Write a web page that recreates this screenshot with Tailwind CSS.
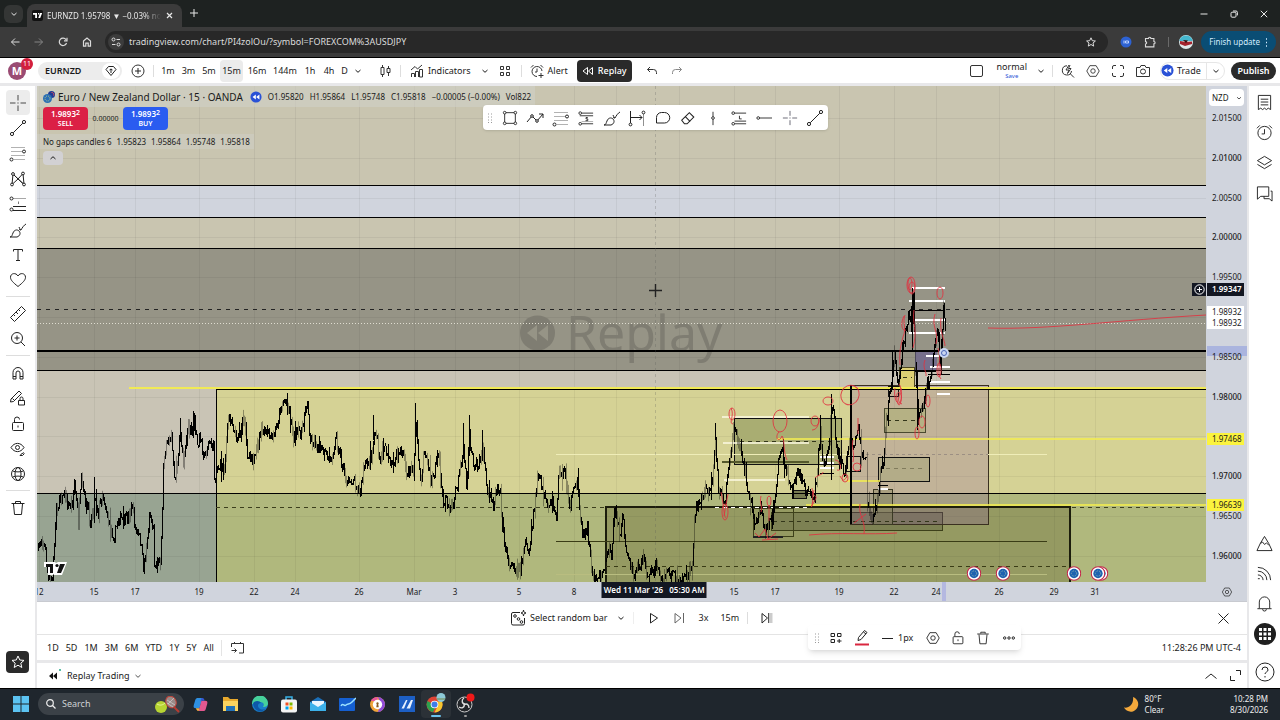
<!DOCTYPE html>
<html lang="en">

<head>
    <meta charset="UTF-8">
    <meta name="viewport" content="width=device-width, initial-scale=1.0">
    <title>EURNZD 1.95798 ▼ −0.03% normal</title>
    <script src="https://cdn.jsdelivr.net/npm/@tailwindcss/browser@4"></script>
</head>

<body class="h-screen flex flex-col overflow-hidden bg-[#e8e8ea] font-['Noto_Sans','Open_Sans',sans-serif] text-[9px] leading-3 text-[#1a1a1a]">

  <!-- Shared icons -->
  <svg class="hidden">
    <symbol id="i-chev" viewBox="0 0 8 8"><path d="M1.500 3L4 5.300 6.500 3" fill="none" stroke="currentColor" /></symbol>
    <symbol id="i-cross" viewBox="0 0 18 18"><path d="M9 1v5.500M9 11.500V17M1 9h5.500M11.500 9H17" fill="none" stroke="currentColor" stroke-opacity=".8" /><path d="M8.500 9h1" stroke="currentColor" /></symbol>
    <symbol id="i-line" viewBox="0 0 18 18"><g fill="none" stroke="currentColor"><path d="M4.200 13.800l9.600-9.600" /><circle cx="3" cy="15" r="1.600" /><circle cx="15" cy="3" r="1.600" /></g></symbol>
    <symbol id="i-fib" viewBox="0 0 18 18"><g fill="none" stroke="currentColor"><path d="M2 3.500h14M2 7.500h11M2 11.500h14M5 15.500h11" opacity=".35" /><circle cx="15" cy="7.500" r="1.500" /><circle cx="2.500" cy="15.500" r="1.500" /></g></symbol>
    <symbol id="i-pos" viewBox="0 0 18 18"><g fill="none" stroke="currentColor"><path d="M4 3.500h13" opacity=".4" /><path d="M4 11.500h13M4 15.500h13" /><path d="M9.500 6.500v2.500" opacity=".6" /><circle cx="2.500" cy="3.500" r="1.500" /><circle cx="2.500" cy="14.500" r="1.500" /></g></symbol>
    <symbol id="i-brush" viewBox="0 0 18 18"><path d="M1 16c2 0 2-2 3-4 1-3 4-4 6-2s1 5-2 6H1zM10 9c1-1 1 0 2 0 1-2 3-5 5-6M10 6c1 2 1 3 2 3" fill="none" stroke="currentColor" /></symbol>
    <symbol id="i-hex" viewBox="0 0 18 18"><g fill="none" stroke="currentColor"><path d="M5.500 3h7L16 9l-3.500 6h-7L2 9z" stroke-linejoin="round" /><circle cx="9" cy="9" r="2.500" /></g></symbol>
    <symbol id="i-lock" viewBox="0 0 18 18"><g fill="none" stroke="currentColor"><rect x="3.500" y="7.500" width="11" height="8" rx="1" /><path d="M5.500 7V4.500a2.500 2.500 0 015 0M9 10.500v2" /></g></symbol>
    <symbol id="i-trash" viewBox="0 0 18 18"><path d="M2.500 4.500h13M6.500 4V2.500h5V4M4.500 5l1 10.500h7l1-10.500" fill="none" stroke="currentColor" stroke-linejoin="round" /></symbol>
    <symbol id="i-grip" viewBox="0 0 6 10"><path d="M1 1h1M4 1h1M1 4h1M4 4h1M1 7h1M4 7h1M1 9.500h1M4 9.500h1" stroke="#999" /></symbol>
    <symbol id="i-rew" viewBox="0 0 14 14"><circle cx="7" cy="7" r="6.500" fill="#2951d6" /><path d="M6.800 4.200v5.600L3 7zM11 4.200v5.600L7.200 7z" fill="#fff" /></symbol>
    <symbol id="i-eu" viewBox="0 0 16 16"><circle cx="8" cy="8" r="7.200" fill="#fff" stroke="#c22b4b" stroke-width="1.200" /><circle cx="8" cy="8" r="5" fill="#1e62b0" /><circle cx="8" cy="8" r="2.800" fill="none" stroke="#8fb2b0" stroke-dasharray="1 1" /></symbol>
  </svg>

  <!-- Browser tabs -->
  <div class="h-[27px] shrink-0 bg-[#1e2221] flex items-end pl-1 text-[#e8e8e8]">
    <button class="w-[19px] h-[18px] mb-1 rounded-md bg-[#343635] flex items-center justify-center" aria-label="Search tabs"><svg class="w-2 h-2"><use href="#i-chev" /></svg></button>
    <div class="ml-1 w-[155px] h-[23px] rounded-t-lg bg-[#3b3b3b] flex items-center pl-[5px] pr-2">
      <svg class="w-[11px] h-[11px] shrink-0" viewBox="0 0 11 11"><rect width="11" height="11" rx="2" fill="#111" /><path d="M1 3h4v5H3.200V4.800H1zM6 3h1.200v1.500H6zM8 3h2.200L8.200 8H6.300z" fill="#fff" /></svg>
      <span class="ml-1 w-[114px] overflow-hidden whitespace-nowrap text-[8px] [mask-image:linear-gradient(to_right,black_85%,transparent)]">EURNZD 1.95798 ▼ −0.03% normal</span>
      <button class="ml-[5px] shrink-0" aria-label="Close tab"><svg class="w-[7px] h-[7px]" viewBox="0 0 7 7"><path d="M1 1l5 5M6 1L1 6" stroke="currentColor" stroke-width="1.200" /></svg></button>
    </div>
    <button class="ml-2 mb-[10px]" aria-label="New tab"><svg class="w-2 h-2" viewBox="0 0 8 8"><path d="M4 0v8M0 4h8" stroke="currentColor" /></svg></button>
    <div class="ml-auto mb-[9px] mr-[12px] flex items-center gap-[22px]">
      <button aria-label="Minimize"><svg class="w-2 h-2" viewBox="0 0 8 8"><path d="M.5 4h7" stroke="currentColor" /></svg></button>
      <button aria-label="Restore"><svg class="w-2 h-2" viewBox="0 0 8 8"><path d="M1 3.200a1 1 0 011-1h3a1 1 0 011 1v3a1 1 0 01-1 1H2a1 1 0 01-1-1zM3 1h3a1.400 1.400 0 011.400 1.400v3" fill="none" stroke="currentColor" /></svg></button>
      <button aria-label="Close"><svg class="w-2 h-2" viewBox="0 0 8 8"><path d="M.8.8l6.400 6.400M7.200.8L.8 7.200" stroke="currentColor" /></svg></button>
    </div>
  </div>

  <!-- Address bar -->
  <div class="h-[31px] shrink-0 bg-[#3b3b3b] border-b border-black flex items-center pl-[3px] pr-1 text-[#dcdcdc]">
    <div class="flex">
      <button class="w-6 flex justify-center" aria-label="Back"><svg class="w-[10px] h-[10px]" viewBox="0 0 10 10"><path d="M9.500 5h-8M5 1.500L1.500 5 5 8.500" fill="none" stroke="currentColor" /></svg></button>
      <button class="w-6 flex justify-center text-[#858585]" aria-label="Forward"><svg class="w-[10px] h-[10px]" viewBox="0 0 10 10"><path d="M.5 5h8M5 1.500L8.500 5 5 8.500" fill="none" stroke="currentColor" /></svg></button>
      <button class="w-6 flex justify-center" aria-label="Reload"><svg class="w-[10px] h-[10px]" viewBox="0 0 10 10"><path d="M8.500 6A3.700 3.700 0 118 2.700M9 .8v3H6" fill="none" stroke="currentColor" stroke-width="1.200" /></svg></button>
      <button class="w-6 flex justify-center" aria-label="Home"><svg class="w-[10px] h-[10px]" viewBox="0 0 10 10"><path d="M1.500 4L5 1l3.500 3v5.200H6.200V6.200H3.800v3H1.500z" fill="none" stroke="currentColor" stroke-width="1.200" /></svg></button>
    </div>
    <div class="ml-[6px] h-[22px] flex-1 rounded-full bg-[#282828] flex items-center pl-[3px] pr-3">
      <span class="w-4 h-4 rounded-full bg-[#3c3c3c] flex items-center justify-center"><svg class="w-[10px] h-[10px]" viewBox="0 0 10 10"><g fill="none" stroke="currentColor"><circle cx="2.500" cy="2.500" r="1.500" /><path d="M5.500 2.500H9M1 7.500h3.500" /><circle cx="7.500" cy="7.500" r="1.500" /></g></svg></span>
      <input class="ml-[5px] w-[400px] bg-transparent text-[9px] outline-none" type="text" aria-label="Address" value="tradingview.com/chart/PI4zolOu/?symbol=FOREXCOM%3AUSDJPY">
      <button class="ml-auto" aria-label="Bookmark"><svg class="w-[10px] h-[10px]" viewBox="0 0 10 10"><path d="M5 .8l1.300 2.900 3.100.3L7 6l.7 3.100L5 7.500 2.300 9.100 3 6 .6 4l3.100-.3z" fill="none" stroke="currentColor" /></svg></button>
    </div>
    <button class="ml-3 w-3 h-3" aria-label="Extension"><svg viewBox="0 0 12 12"><circle cx="6" cy="6" r="5.500" fill="#2d62d3" /><path d="M4 4.500v3M5.500 5h3v2h-3z" stroke="#bcd2ff" fill="none" /></svg></button>
    <button class="ml-3 w-3 h-3" aria-label="Extensions"><svg viewBox="0 0 12 12"><path d="M1.500 2.500h3a1.200 1.200 0 012.400 0h3v3a1.200 1.200 0 010 2.400v3h-8.400V8a1.200 1.200 0 000-2.400z" fill="none" stroke="currentColor" stroke-width="1.100" /></svg></button>
    <span class="ml-3 w-px h-[10px] bg-[#6a6a6a]"></span>
    <button class="ml-[10px] w-[14px] h-[14px]" aria-label="Profile"><svg viewBox="0 0 14 14"><circle cx="7" cy="7" r="7" fill="#dfe8ea" /><path d="M.7 4.500A7 7 0 0113.300 4.500V6H.5z" fill="#45b8cf" /><path d="M1 6l6 1 6-.5V9l-7 2-5-2z" fill="#a3222c" /><path d="M4 5l5 .5L7 8z" fill="#311" /></svg></button>
    <button class="ml-2 h-[22px] rounded-full bg-[#0a4d74] px-2 flex items-center gap-[5px] text-[8px] text-[#d3ecff] whitespace-nowrap">Finish update <svg class="w-[3px] h-[9px]" viewBox="0 0 3 9"><path d="M1 1h1M1 4.500h1M1 8h1" stroke="currentColor" stroke-width="1.400" /></svg></button>
  </div>

  <!-- Chart header -->
  <header class="h-[25px] mb-[3px] shrink-0 bg-white flex items-center pl-2 pr-1 relative">
    <button class="w-[18px] h-[18px] rounded-full bg-[#9a4b73] text-white text-[11px] font-bold relative" aria-label="User menu">M
      <span class="absolute left-[13px] -top-1 w-3 h-3 rounded-full bg-[#d31f3c] text-[7px] leading-3 font-normal">11</span>
    </button>
    <div class="ml-3 w-[84px] h-[18px] rounded-full bg-[#ececec] flex items-center justify-between pl-[7px] pr-[2px]">
      <button class="font-semibold">EURNZD</button>
      <button class="w-[18px] h-4 rounded-full bg-white flex items-center justify-center" aria-label="Flag symbol"><svg class="w-[12px] h-3" viewBox="0 0 12 12"><path d="M3.500 1.500h5l2.500 3L6 10.500 1 4.500zM6 4v4M4.500 5L6 4l1.500 1" fill="none" stroke="#222" /></svg></button>
    </div>
    <button class="ml-[9px]" aria-label="Compare"><svg class="w-[14px] h-[14px]" viewBox="0 0 14 14"><circle cx="7" cy="7" r="6" fill="none" stroke="#333" /><path d="M7 4v6M4 7h6" stroke="#222" /></svg></button>
    <span class="ml-2 w-px h-3 bg-[#ddd]"></span>
    <nav class="ml-1 flex items-center">
      <button class="w-[20px]">1m</button>
      <button class="w-[21px]">3m</button>
      <button class="w-[20px]">5m</button>
      <button class="w-[23px] h-[22px] ml-px rounded bg-[#ebebeb]">15m</button>
      <button class="w-[28px]">16m</button>
      <button class="w-[28px]">144m</button>
      <button class="w-[20px] ml-px">1h</button>
      <button class="w-[18px]">4h</button>
      <button class="w-[13px]">D</button>
      <button class="w-[14px] flex justify-center" aria-label="More intervals"><svg class="w-2 h-2"><use href="#i-chev" /></svg></button>
    </nav>
    <button class="ml-[13px]" aria-label="Candles"><svg class="w-[14px] h-[14px]" viewBox="0 0 14 14"><path d="M4.500 1v2M4.500 11v2M3 3.500h3v7H3zM10.500 2v2M10.500 9v3M9 4.500h3v4H9z" fill="none" stroke="#333" /></svg></button>
    <span class="ml-2 w-px h-3 bg-[#ddd]"></span>
    <button class="ml-[9px] flex items-center gap-1"><svg class="w-[14px] h-[14px]" viewBox="0 0 14 14"><path d="M1 6l4-3.500L7.500 5 12 1M1.500 13V9.500h3V13M5.500 13V7.500h3V13M9.500 13V5.500h3V13z" fill="none" stroke="#333" /></svg>Indicators</button>
    <button class="ml-[10px]" aria-label="Indicator templates"><svg class="w-2 h-2"><use href="#i-chev" /></svg></button>
    <button class="ml-[10px]" aria-label="Layouts"><svg class="w-3 h-3" viewBox="0 0 12 12"><path d="M1.500 1.500h3v3h-3zM7.500 1.500h3v3h-3zM1.500 7.500h3v3h-3zM7.500 7.500h3v3h-3z" fill="none" stroke="#333" /></svg></button>
    <span class="ml-[10px] w-px h-3 bg-[#ddd]"></span>
    <button class="ml-2 flex items-center gap-1"><svg class="w-[14px] h-[14px]" viewBox="0 0 14 14"><path d="M7 12.500A5 5 0 1112 7M7 4.500V8H5M1 3.500L3.500 1M10.500 1L13 3.500M11 9v5M8.500 11.500h5" fill="none" stroke="#333" /></svg>Alert</button>
    <button class="ml-[9px] w-[55px] h-[22px] rounded bg-[#2a2a2a] text-white flex items-center justify-center gap-1 font-medium"><svg class="w-3 h-3" viewBox="0 0 12 12"><path d="M5.500 2.500v7L1 6zM10.500 2.500v7L6.500 6z" fill="none" stroke="#fff" /></svg>Replay</button>
    <button class="ml-[14px]" aria-label="Undo"><svg class="w-3 h-3" viewBox="0 0 12 12"><path d="M4 2L1.500 4.500 4 7M1.500 4.500h6a3 3 0 013 3V9" fill="none" stroke="#333" /></svg></button>
    <button class="ml-[13px] text-[#888]" aria-label="Redo"><svg class="w-3 h-3" viewBox="0 0 12 12"><path d="M8 2l2.500 2.500L8 7M10.500 4.500h-6a3 3 0 00-3 3V9" fill="none" stroke="currentColor" /></svg></button>

    <div class="ml-auto flex items-center">
      <button aria-label="Layout setup"><svg class="w-[14px] h-3" viewBox="0 0 14 12"><rect x=".5" y=".5" width="12" height="11" rx="1.500" fill="none" stroke="#333" /></svg></button>
      <button class="ml-3 flex flex-col items-center"><span class="leading-[10px]">normal</span><span class="text-[6px] leading-[8px] text-[#2951d6]">Save</span></button>
      <button class="ml-[10px]" aria-label="Manage layouts"><svg class="w-2 h-2"><use href="#i-chev" /></svg></button>
      <span class="ml-[7px] w-px h-3 bg-[#ddd]"></span>
      <button class="ml-2" aria-label="Quick search"><svg class="w-[14px] h-[14px]" viewBox="0 0 14 14"><path d="M6 1.800A4.600 4.600 0 1010.500 7M9.500 10l3.500 3.500M8 1L5 6h3L6.500 9.500 10 4.500H7.500L9 1" fill="none" stroke="#333" /></svg></button>
      <button class="ml-[10px]" aria-label="Settings"><svg class="w-4 h-4 text-[#333]"><use href="#i-hex" /></svg></button>
      <button class="ml-[11px]" aria-label="Fullscreen"><svg class="w-3 h-3" viewBox="0 0 12 12"><path d="M.5 4V2A1.500 1.500 0 012 .5h2M8 .5h2A1.500 1.500 0 0111.500 2v2M11.500 8v2a1.500 1.500 0 01-1.500 1.500H8M4 11.500H2A1.500 1.500 0 01.5 10V8" fill="none" stroke="#333" /></svg></button>
      <button class="ml-3" aria-label="Snapshot"><svg class="w-[14px] h-3" viewBox="0 0 14 12"><path d="M.5 2.500h3.500L5 .5h4l1 2h3.500v9H.5z" fill="none" stroke="#333" stroke-linejoin="round" /><circle cx="7" cy="6.500" r="2.500" fill="none" stroke="#333" /></svg></button>
      <div class="ml-[10px] h-[18px] w-[65px] rounded-full border border-[#e6e6e6] flex items-center">
        <button class="flex items-center gap-[3px]"><svg class="w-[13px] h-[13px]"><use href="#i-rew" /></svg>Trade</button>
        <button class="ml-auto pl-[5px] pr-1 h-4 border-l border-[#e6e6e6]" aria-label="Trade menu"><svg class="w-2 h-2"><use href="#i-chev" /></svg></button>
      </div>
      <button class="ml-[6px] w-[45px] h-[18px] rounded-full bg-[#2a2a2a] text-white font-semibold">Publish</button>
    </div>
  </header>

  <div class="flex-1 min-h-0 flex gap-[2px]">

    <!-- Drawing tools -->
    <aside class="w-[35px] shrink-0 bg-white flex flex-col items-center text-[#222]">
      <div class="mt-1 h-[203px] flex flex-col">
        <button class="flex-1 w-6 rounded bg-[#ececec] flex items-center justify-center" aria-label="Cross"><svg class="w-[18px] h-[18px]"><use href="#i-cross" /></svg></button>
        <button class="flex-1 w-6 flex items-center justify-center" aria-label="Trend line"><svg class="w-[18px] h-[18px]"><use href="#i-line" /></svg></button>
        <button class="flex-1 w-6 flex items-center justify-center" aria-label="Fib retracement"><svg class="w-[18px] h-[18px]"><use href="#i-fib" /></svg></button>
        <button class="flex-1 w-6 flex items-center justify-center" aria-label="Patterns"><svg class="w-[18px] h-[18px]" viewBox="0 0 18 18"><g fill="none" stroke="currentColor"><path d="M3 14.500L4 4l5 5 5-5.500 1 11L9 9zM4 4l11 10.500" /><circle cx="3" cy="14.500" r="1.400" fill="#fff" /><circle cx="4" cy="4" r="1.400" fill="#fff" /><circle cx="14" cy="3.500" r="1.400" fill="#fff" /><circle cx="15" cy="14.500" r="1.400" fill="#fff" /></g></svg></button>
        <button class="flex-1 w-6 flex items-center justify-center" aria-label="Positions"><svg class="w-[18px] h-[18px]"><use href="#i-pos" /></svg></button>
        <button class="flex-1 w-6 flex items-center justify-center" aria-label="Brush"><svg class="w-[18px] h-[18px]"><use href="#i-brush" /></svg></button>
        <button class="flex-1 w-6 flex items-center justify-center" aria-label="Text"><svg class="w-[18px] h-[18px]" viewBox="0 0 18 18"><path d="M4.500 5.500v-2h9v2M9 3.500v11M7 14.500h4" fill="none" stroke="currentColor" /></svg></button>
        <button class="flex-1 w-6 flex items-center justify-center" aria-label="Icons"><svg class="w-[18px] h-[18px]" viewBox="0 0 18 18"><path d="M9 15.500C4 11.500 1.500 9 1.500 6.300c0-4.300 5.500-5 7.500-1.300 2-3.700 7.500-3 7.500 1.300 0 2.700-2.500 5.200-7.500 9.200z" fill="none" stroke="currentColor" /></svg></button>
      </div>
      <span class="mt-[3px] w-6 h-px bg-[#ddd]"></span>
      <div class="mt-[4px] flex flex-col">
        <button class="h-[25px] w-6 flex items-center justify-center" aria-label="Measure"><svg class="w-[18px] h-[18px]" viewBox="0 0 18 18"><path d="M1.500 12.500l11-11 4 4-11 11zM4.500 9.500l1.500 1.500M7 7l2 2M9.500 4.500L11 6" fill="none" stroke="currentColor" stroke-linejoin="round" /></svg></button>
        <button class="h-[25px] w-6 flex items-center justify-center" aria-label="Zoom in"><svg class="w-[18px] h-[18px]" viewBox="0 0 18 18"><circle cx="8" cy="8" r="5.500" fill="none" stroke="currentColor" /><path d="M12 12l4 4M8 5.500v5M5.500 8h5" stroke="currentColor" /></svg></button>
      </div>
      <span class="mt-1 w-6 h-px bg-[#ddd]"></span>
      <div class="mt-[4px] h-[127px] flex flex-col">
        <button class="flex-1 w-6 flex items-center justify-center" aria-label="Magnet"><svg class="w-[18px] h-[18px]" viewBox="0 0 18 18"><path d="M4 15V8.500a5 5 0 0110 0V15h-3V9a2 2 0 00-4 0v6zM4 12.500h3M11 12.500h3" fill="none" stroke="currentColor" /></svg></button>
        <button class="flex-1 w-6 flex items-center justify-center" aria-label="Keep drawing"><svg class="w-[18px] h-[18px]" viewBox="0 0 18 18"><path d="M2 10L10 2l2.500 2.500-8 8-3 .5zM3.500 9.500l2 2M9.500 11.500h6v4.500h-6zM11 11V9.500a1.500 1.500 0 013 0V11" fill="none" stroke="currentColor" /></svg></button>
        <button class="flex-1 w-6 flex items-center justify-center" aria-label="Lock drawings"><svg class="w-[18px] h-[18px]"><use href="#i-lock" /></svg></button>
        <button class="flex-1 w-6 flex items-center justify-center" aria-label="Hide drawings"><svg class="w-[18px] h-[18px]" viewBox="0 0 18 18"><path d="M2 7.500c3.500-5.500 9.500-5.500 13 0-3.500 5.500-9.500 5.500-13 0zM11 15.500c1-2 3-2 4-3M11 15.500h2.500l2-2" fill="none" stroke="currentColor" /><circle cx="8.500" cy="7.500" r="2" fill="none" stroke="currentColor" /></svg></button>
        <button class="flex-1 w-6 flex items-center justify-center" aria-label="Sync drawings"><svg class="w-[18px] h-[18px]" viewBox="0 0 18 18"><g fill="none" stroke="currentColor"><circle cx="9" cy="9" r="6.500" /><ellipse cx="9" cy="9" rx="3" ry="6.500" /><path d="M3.500 6c3.500 1.200 7.500 1.200 11 0M3.500 12c3.500-1.200 7.500-1.200 11 0" /></g></svg></button>
      </div>
      <span class="mt-[3px] w-6 h-px bg-[#ddd]"></span>
      <button class="mt-2 w-6 flex justify-center" aria-label="Remove"><svg class="w-[18px] h-[18px]"><use href="#i-trash" /></svg></button>
      <button class="mt-auto mb-[15px] w-[23px] h-[22px] rounded bg-[#2a2a2a] text-white flex items-center justify-center" aria-label="Favorites"><svg class="w-[14px] h-[14px]" viewBox="0 0 14 14"><path d="M7 1l1.800 4 4.200.4L9.800 8.200l1 4.300L7 10.200l-3.800 2.300 1-4.300L1 5.400 5.200 5z" fill="none" stroke="currentColor" /></svg></button>
    </aside>

    <main class="flex-1 min-w-0 flex flex-col relative">
      <div class="flex-1 min-h-0 flex bg-[#d0d4dd]">

        <!-- Plot -->
        <section class="flex-1 min-w-0 relative overflow-hidden">
          <svg class="absolute inset-0 w-full h-full" viewBox="37 86 1169 496" preserveAspectRatio="none">
            <rect x="37" y="86" width="1169" height="99" fill="#c9c5b0" />
            <rect x="37" y="217" width="1169" height="31" fill="#c9c5b0" />
            <rect x="37" y="248" width="1169" height="122" fill="#969486" />
            <rect x="37" y="370" width="1169" height="123" fill="#c9c4b5" />
            <rect x="37" y="493" width="180" height="89" fill="#98a492" />
            <rect x="216" y="389" width="990" height="104" fill="#d5d295" />
            <rect x="216" y="493" width="990" height="89" fill="#b0b87d" />
            <rect x="606" y="506" width="464" height="76" fill="#959a62" />
            <path id="grid" stroke="#000" stroke-opacity=".05" fill="none" />
            <!-- watermark -->
            <circle cx="537.500" cy="333" r="17.500" fill="#7f7d72" />
            <path d="M537 325v16l-10-8zM548 325v16l-10-8z" fill="#969486" />
            <text x="566" y="351" font-size="50" fill="#7f7d72" font-family="Noto Sans, sans-serif">Replay</text>
            <!-- zones -->
            <g shape-rendering="crispEdges">
              <rect x="734" y="418" width="107" height="46" fill="#a9ad72" stroke="#111" />
              <rect x="771" y="512" width="171" height="18" fill="#7d8153" stroke="#3d401a" />
              <rect x="850" y="385" width="138" height="139" fill="#7f45a3" fill-opacity=".22" stroke="#3a3020" />
              <rect x="884" y="408" width="41" height="24" fill="#b5b184" stroke="#4a4a30" />
              <rect x="878" y="457" width="51" height="24" fill="#b3ac88" stroke="#111" />
              <rect x="873" y="489" width="19" height="35" fill="#7c7a50" fill-opacity=".35" stroke="#3b3a24" />
              <rect x="753" y="508" width="40" height="28" fill="none" stroke="#3d401a" />
              <path d="M753 536.500h30" stroke="#222" stroke-width="2" />
              <rect x="846" y="456" width="14" height="15" fill="none" stroke="#111" />
              <rect x="792" y="490" width="14" height="8" fill="#777b50" stroke="#111" />
              <rect x="899" y="367" width="15" height="20" fill="#dccf74" stroke="#4a4520" />
              <rect x="915" y="350" width="22" height="21" fill="#766f8c" />
              <rect x="888" y="386" width="10" height="10" fill="none" stroke="#111" />
            </g>
            <!-- levels -->
            <g fill="none" shape-rendering="crispEdges">
              <path d="M129 388H1206" stroke="#f1ea55" stroke-width="2" />
              <path d="M37 185.500H1206M37 217.500H1206M37 248.500H1206M37 370.500H1206M216 389.500H1206M37 493.500H1206M216.500 389V582" stroke="#000" />
              <path d="M37 350.500H1206" stroke="#000" stroke-width="2" />
              <path d="M37 309.500H1206" stroke="#222" stroke-dasharray="4 5" />
              <path d="M37 323.500H1206" stroke="#dedcd0" stroke-dasharray="1 2" />
              <path d="M216 507.500H1206" stroke="#3c3f1d" stroke-dasharray="4 4" />
              <path d="M606 582V506.500H1070V582" stroke="#1c1d0c" stroke-width="2" />
              <path d="M556 541H1047" stroke="#3a3c16" />
              <path d="M606 566.500H1070" stroke="#3a3c16" stroke-dasharray="4 4" />
              <path d="M556 574H1047" stroke="#b9bd80" />
              <path d="M556 454.500H850M988 454.500H1047" stroke="#efedb8" />
              <path d="M866 454.500H988" stroke="#9c8f83" stroke-dasharray="3 3" />
              <path d="M777 438.500H1206M806 504.500H1206M846 481H880" stroke="#f3ec50" stroke-width="2" stroke-opacity=".8" />
              <path d="M722 416.500H809M723 443H809M724 480H785" stroke="#faf8df" stroke-width="2" stroke-opacity=".8" />
              <path d="M715 507.500H810" stroke="#fff" stroke-dasharray="4 4" />
              <path d="M722 462H809" stroke="#54582b" stroke-width="2" />
              <path d="M740 441.500H840M773 521H940M887 420.500H918M903 377.500H912" stroke="#33361a" stroke-dasharray="4 4" />
              <path d="M886 468.500H924" stroke="#807b5c" stroke-dasharray="4 4" />
              <path d="M911 288H945M909 301H945M911 320H945M909 333H945M926 356H945M930 367H950M930 382H950M937 394H950M820 457H834M820 463H834M820 468H834M878 489H888" stroke="#fff" stroke-width="2" />
              <path d="M909 310.500H943M928 374.500H950M820 473H834M878 485.500H888M915 371H936" stroke="#000" />
            </g>
            <path d="M655.500 86V582" stroke="#555" stroke-opacity=".25" stroke-dasharray="3 3" />
            <path id="bars-soft" stroke="#000" stroke-opacity=".35" fill="none" />
            <path id="bars" stroke="#000" fill="none" shape-rendering="crispEdges" />
            <path d="M851 385V524" stroke="#000" stroke-width="2" />
            <!-- pen marks -->
            <g fill="none" stroke="#e0313f" stroke-width="1" stroke-opacity=".85">
              <ellipse cx="911" cy="285" rx="4" ry="8" /><ellipse cx="912" cy="288" rx="3" ry="6" /><ellipse cx="910" cy="284" rx="2" ry="6" />
              <ellipse cx="940" cy="293" rx="3" ry="6" /><ellipse cx="850" cy="395" rx="9" ry="10" transform="rotate(25 850 395)" /><ellipse cx="828" cy="401" rx="5" ry="4" />
              <ellipse cx="780" cy="421" rx="7" ry="11" /><path d="M779 432c-5 5 0 12 3 4 3 4 1 16 5 24" />
              <ellipse cx="732" cy="414" rx="3" ry="6" /><path d="M731 408c4 8-3 15 2 16" />
              <ellipse cx="725" cy="512" rx="3" ry="8" /><path d="M721 492c3 14 3 26 5 26M728 494l-4 22" />
              <ellipse cx="815" cy="421" rx="4" ry="5" /><path d="M812 430c6 0 7-8 7-12" />
              <path d="M905 315c-3 8 2 12-2 22-2 8-4 14-3 28M895 388c-2 12 4 20 6 12s-6-12-4 0 6 0 4-12M899 384c6 8-6 16 3 20" />
              <path d="M904 316c-4 8-2 16 2 14M914 310c-2 14 4 20-1 38M935 314c-4 12 4 18 1 30M941 318c-2 14 4 22 4 28M938 348c4 12-2 26 3 31M925 360c-3 8 2 12 1 16" />
              <ellipse cx="917" cy="433" rx="2" ry="6" /><ellipse cx="922" cy="422" rx="3" ry="6" /><ellipse cx="928" cy="401" rx="2" ry="6" /><ellipse cx="939" cy="370" rx="2" ry="7" />
              <ellipse cx="769" cy="501" rx="2" ry="5" /><path d="M761 496c-2 8 2 10 0 16M769 505v16M812 488c3 18-4 24 2 14s-3-2 0-12M840 476c5 10 6-2 7 2M835 460c6 0 8 12 2 10" />
              <ellipse cx="857" cy="467" rx="4" ry="4" /><ellipse cx="845" cy="478" rx="3" ry="4" /><path d="M815 478c4-4 8-3 8-6M853 440c-2 8 2 12 0 22M858 418v16" />
              <path d="M809 535c30-3 60 0 88-2M860 504c-2 12 6 16 4 30M866 514l-12 9M755 533l4 4 6-8 3 10 8-6M762 540l16-1" />
              <path d="M988 328c60 2 130-8 218-13" />
            </g>
            <circle cx="944" cy="353" r="5" fill="#c9d6f2" /><circle cx="944" cy="353" r="2.500" fill="none" stroke="#4a66b8" />
            <!-- pointer -->
            <path d="M655.500 284v13M649 290.500h13" stroke="#222" stroke-width="1.400" />
            <!-- logo -->
            <path d="M44 562h11l1 1 2-1h9l-5 13h-8l-1-1v1h-5v-8h-4z" fill="#fff" />
            <path d="M46 564h7v9h-3v-6h-4zM60 564h5l-4 9h-4z" fill="#111" /><circle cx="57" cy="565.500" r="1.600" fill="#111" />
          </svg>

          <svg class="absolute bottom-[1px] w-[15px] h-[15px] -translate-x-1/2" style="left:80.15%"><use href="#i-eu" /></svg>
          <svg class="absolute bottom-[1px] w-[15px] h-[15px] -translate-x-1/2" style="left:82.650%"><use href="#i-eu" /></svg>
          <svg class="absolute bottom-[1px] w-[15px] h-[15px] -translate-x-1/2" style="left:88.700%"><use href="#i-eu" /></svg>
          <svg class="absolute bottom-[1px] w-[15px] h-[15px] -translate-x-1/2" style="left:91.050%"><use href="#i-eu" /></svg>
          <svg class="absolute bottom-[1px] w-[15px] h-[15px] -translate-x-1/2" style="left:90.800%"><use href="#i-eu" /></svg>

          <!-- Legend -->
          <div class="absolute left-0 top-0 flex flex-col items-start whitespace-nowrap">
            <div class="h-[21px] pl-[6px] pr-1 flex items-center bg-[#d0d0c8]/60">
              <svg class="w-3 h-3" viewBox="0 0 12 12"><circle cx="8.500" cy="3.500" r="3.500" fill="#1f3a93" /><path d="M8.500 1.500a2 2 0 012 3" stroke="#e04a5a" fill="none" /><circle cx="4.500" cy="7.500" r="4.500" fill="#2a6fb5" /><circle cx="4.500" cy="7.500" r="2.500" fill="none" stroke="#b6c98a" stroke-dasharray="1 1" /></svg>
              <h1 class="ml-[3px] text-[10px]">Euro / New Zealand Dollar · 15 · OANDA</h1>
              <svg class="ml-[7px] w-3 h-3"><use href="#i-rew" /></svg>
              <p class="ml-[6px] flex gap-[6px] text-[8px]"><span>O1.95820</span><span>H1.95864</span><span>L1.95748</span><span>C1.95818</span><span>−0.00005 (−0.00%)</span><span>Vol822</span></p>
            </div>
            <div class="ml-[6px] flex items-center text-[8px]">
              <button class="w-[45px] h-[23px] rounded bg-[#db2045] text-white font-semibold flex flex-col items-center justify-center"><span class="flex text-[8px] leading-[10px]">1.9893<span class="text-[7px] leading-[8px]">2</span></span><span class="text-[7px] leading-[10px]">SELL</span></button>
              <span class="w-[35px] text-center text-[7px]">0.00000</span>
              <button class="w-[45px] h-[23px] rounded bg-[#2a5cf0] text-white font-semibold flex flex-col items-center justify-center"><span class="flex text-[8px] leading-[10px]">1.9893<span class="text-[7px] leading-[8px]">2</span></span><span class="text-[7px] leading-[10px]">BUY</span></button>
            </div>
            <p class="mt-1 h-[15px] pl-[6px] pr-1 flex items-center gap-[5px] text-[8px] bg-[#d0d0c8]/50"><span>No gaps candles 6</span><span>1.95823</span><span>1.95864</span><span>1.95748</span><span>1.95818</span></p>
            <button class="ml-[6px] mt-[2px] w-5 h-[14px] rounded-sm bg-[#d2d1d3] flex items-center justify-center" aria-label="Collapse legend"><svg class="w-2 h-2 rotate-180"><use href="#i-chev" /></svg></button>
          </div>

          <!-- Favourite tools -->
          <div class="absolute left-[446px] top-[19px] w-[345px] h-[25px] rounded bg-white shadow flex items-center pl-1 text-[#222]">
            <svg class="w-[6px] h-[10px] mr-1 shrink-0"><use href="#i-grip" /></svg>
            <button class="flex-1 flex justify-center" aria-label="Rectangle"><svg class="w-4 h-4" viewBox="0 0 18 18"><g fill="none" stroke="currentColor"><path d="M3 3h12v12H3z" /><g fill="#fff"><circle cx="3" cy="3" r="1.500" /><circle cx="15" cy="3" r="1.500" /><circle cx="3" cy="15" r="1.500" /><circle cx="15" cy="15" r="1.500" /></g></g></svg></button>
            <button class="flex-1 flex justify-center" aria-label="Path"><svg class="w-[18px] h-[18px]" viewBox="0 0 18 18"><path d="M1 13l5-6 5 5 6-7M13 5h4v4" fill="none" stroke="currentColor" /><circle cx="6" cy="7" r="1.300" fill="#fff" stroke="currentColor" /><circle cx="11" cy="12" r="1.300" fill="#fff" stroke="currentColor" /></svg></button>
            <button class="flex-1 flex justify-center" aria-label="Fib retracement"><svg class="w-[18px] h-[18px]"><use href="#i-fib" /></svg></button>
            <button class="flex-1 flex justify-center" aria-label="Short position"><svg class="w-4 h-4" viewBox="0 0 18 18"><g fill="none" stroke="currentColor"><path d="M4 3.500h13M2 6.500h15M4 15.500h13" /><path d="M4 13h13" opacity=".4" /><path d="M11 8.500H9v1.500h2v2H8.500" /><circle cx="2.500" cy="3.500" r="1.500" /><circle cx="2.500" cy="15.500" r="1.500" /></g></svg></button>
            <button class="flex-1 flex justify-center" aria-label="Brush"><svg class="w-[18px] h-[18px]"><use href="#i-brush" /></svg></button>
            <button class="flex-1 flex justify-center" aria-label="Date range"><svg class="w-[18px] h-[18px]" viewBox="0 0 18 18"><g fill="none" stroke="currentColor"><path d="M2.500 2v12M3 8.500h11M11.500 6l2.500 2.500-2.500 2.500" /><path d="M15.500 5v12" opacity=".5" /><circle cx="2.500" cy="15.500" r="1.400" /><circle cx="15.500" cy="3.500" r="1.400" /></g></svg></button>
            <button class="flex-1 flex justify-center" aria-label="Shape"><svg class="w-[18px] h-[18px]" viewBox="0 0 18 18"><path d="M2.500 14V8.500a5 5 0 015-5h3a5 5 0 010 10.500z" fill="none" stroke="currentColor" /></svg></button>
            <button class="flex-1 flex justify-center" aria-label="Eraser"><svg class="w-4 h-4" viewBox="0 0 18 18"><path d="M2 11.500l8.500-8.500 5 5-7.500 7.500H5zM6 7.500l5.500 5.500" fill="none" stroke="currentColor" stroke-width="1.200" /></svg></button>
            <button class="flex-1 flex justify-center" aria-label="Vertical line"><svg class="w-4 h-4" viewBox="0 0 18 18"><path d="M9 2v5.500M9 10.500V17" stroke="currentColor" /><circle cx="9" cy="9" r="1.500" fill="none" stroke="currentColor" /></svg></button>
            <button class="flex-1 flex justify-center" aria-label="Long position"><svg class="w-4 h-4" viewBox="0 0 18 18"><g fill="none" stroke="currentColor"><path d="M4 3.500h13M4 12.500h13M4 15.500h13M9.500 6.500V10H12" /><circle cx="2.500" cy="3.500" r="1.500" /><circle cx="2.500" cy="15.500" r="1.500" /></g></svg></button>
            <button class="flex-1 flex justify-center" aria-label="Horizontal ray"><svg class="w-4 h-4" viewBox="0 0 18 18"><path d="M4 9h14" stroke="currentColor" /><circle cx="2.500" cy="9" r="1.500" fill="none" stroke="currentColor" /></svg></button>
            <button class="flex-1 flex justify-center" aria-label="Cross line"><svg class="w-4 h-4 text-[#334]"><use href="#i-cross" /></svg></button>
            <button class="flex-1 flex justify-center" aria-label="Trend line"><svg class="w-[18px] h-[18px]"><use href="#i-line" /></svg></button>
          </div>

          <span class="absolute right-0 top-[197px] w-[14px] h-[13px] bg-[#131722] flex items-center justify-center"><svg class="w-[11px] h-[11px]" viewBox="0 0 11 11"><circle cx="5.500" cy="5.500" r="4.700" fill="none" stroke="#fff" /><path d="M5.500 3v5M3 5.500h5" stroke="#fff" /></svg></span>
        </section>

        <!-- Price axis -->
        <div class="w-[41px] shrink-0 relative text-[8px] flex flex-col pt-3 pb-[6px] pl-[6px]">
          <span class="flex-1 flex items-center">2.01500</span>
          <span class="flex-1 flex items-center font-medium">2.01000</span>
          <span class="flex-1 flex items-center">2.00500</span>
          <span class="flex-1 flex items-center font-medium">2.00000</span>
          <span class="flex-1 flex items-center">1.99500</span>
          <span class="flex-1"></span>
          <span class="flex-1 flex items-center relative z-10">1.98500</span>
          <span class="flex-1 flex items-center font-medium">1.98000</span>
          <span class="flex-1"></span>
          <span class="flex-1 flex items-center font-medium">1.97000</span>
          <span class="flex-1 flex items-center">1.96500</span>
          <span class="flex-1 flex items-center font-medium">1.96000</span>
          <select class="absolute left-[3px] top-[3px] w-[35px] h-[17px] rounded-sm bg-white pl-[3px] text-[8px] appearance-none" aria-label="Currency"><option>NZD</option></select>
          <svg class="absolute right-[5px] top-[9px] w-[6px] h-[6px] pointer-events-none"><use href="#i-chev" /></svg>
          <span class="absolute left-px top-[197px] w-[37px] h-[13px] pl-[5px] bg-[#131722] text-white font-semibold">1.99347</span>
          <span class="absolute left-px top-[220px] w-[37px] h-[23px] pl-[5px] bg-white leading-[11px]">1.98932<br>1.98932</span>
          <span class="absolute left-px right-0 top-[260px] h-[10px] bg-[#aab4de]"></span>
          <span class="absolute left-px top-[347px] w-[37px] h-3 pl-[5px] bg-[#fbf33e]">1.97468</span>
          <span class="absolute left-px top-[413px] w-[37px] h-3 pl-[5px] bg-[#fbf33e]">1.96639</span>
        </div>
      </div>

      <!-- Time axis -->
      <div class="h-[20px] shrink-0 bg-[#d0d4dd] border-b border-[#c8cad0] flex text-[8px]">
        <div id="time-axis" class="flex-1 relative overflow-hidden">
          <span class="absolute top-0 h-[19px] w-[4px] bg-[#b4b8e0]" style="left:77.400%"></span>
        </div>
        <button class="w-[41px] flex items-center justify-center" aria-label="Axis settings"><svg class="w-3 h-3"><use href="#i-hex" /></svg></button>
      </div>

      <!-- Replay controls -->
      <div class="h-8 shrink-0 bg-white flex items-center relative pl-[474px]">
        <button class="flex items-center gap-1 whitespace-nowrap"><svg class="w-[15px] h-4" viewBox="0 0 15 16"><g fill="none" stroke="#222"><path d="M9 2.500H2A1.500 1.500 0 00.5 4v9.500A1.500 1.500 0 002 15h10a1.500 1.500 0 001.500-1.500V8M12.500 0c.3 2 .5 2.500 2.500 3-2 .4-2.200 1-2.500 3-.3-2-.5-2.600-2.500-3 2-.5 2.200-1 2.500-3z" /><circle cx="4" cy="6" r="1.300" /><circle cx="7.500" cy="9" r="1.300" /><circle cx="10.500" cy="12" r="1.300" /></g></svg>Select random bar</button>
        <svg class="ml-[9px] w-2 h-2"><use href="#i-chev" /></svg>
        <span class="ml-2 w-px h-3 bg-[#eee]"></span>
        <button class="ml-[14px]" aria-label="Play"><svg class="w-3 h-3" viewBox="0 0 12 12"><path d="M2.500 1.500v9.500L9.500 6z" fill="none" stroke="#222" /></svg></button>
        <button class="ml-[13px]" aria-label="Step forward"><svg class="w-3 h-3" viewBox="0 0 12 12"><path d="M2 1.500V11L8 6zM10.500 1v10" fill="none" stroke="#666" /></svg></button>
        <button class="ml-[14px]">3x</button>
        <button class="ml-3">15m</button>
        <span class="ml-2 w-px h-3 bg-[#ddd]"></span>
        <button class="ml-[13px]" aria-label="Jump to real time"><svg class="w-3 h-3" viewBox="0 0 12 12"><path d="M1 1.500V11L6.500 6z" fill="none" stroke="#222" /><path d="M9.500 1v10" stroke="#ccc" stroke-width="4" /><path d="M7.500 1v10" stroke="#555" /></svg></button>
        <button class="ml-auto mr-[18px]" aria-label="Close replay"><svg class="w-[11px] h-[11px]" viewBox="0 0 11 11"><path d="M.5.5l10 10M10.500.5l-10 10" stroke="#222" /></svg></button>
      </div>

      <!-- Date ranges -->
      <div class="h-[26px] shrink-0 bg-white border-t border-[#e4e4e4] flex items-center pl-[10px] pr-[6px]">
        <nav class="flex gap-[7px]">
          <button>1D</button><button>5D</button><button>1M</button><button>3M</button><button>6M</button><button>YTD</button><button>1Y</button><button>5Y</button><button>All</button>
        </nav>
        <span class="ml-[7px] w-px h-4 bg-[#e4e4e4]"></span>
        <button class="ml-[9px]" aria-label="Go to date"><svg class="w-[13px] h-[13px]" viewBox="0 0 13 13"><path d="M.5 6V2.500h12v9.500H8M3.500 1v2M9.500 1v2M.5 9.500h5M3.500 7.500l2 2-2 2" fill="none" stroke="#333" /></svg></button>
        <span class="ml-auto">11:28:26 PM UTC-4</span>
      </div>

      <!-- Replay trading panel -->
      <div class="mt-[3px] h-[25px] shrink-0 bg-white flex items-center pl-3 pr-[6px]">
        <button class="flex items-center"><svg class="w-2 h-2" viewBox="0 0 8 8"><path d="M4 .5v7L0 4zM8 .5v7L4 4z" fill="#111" /></svg><span class="w-[2px] h-[2px] rounded-full bg-[#2a8] ml-[2px] mb-3"></span><span class="ml-[6px]">Replay Trading</span><svg class="ml-1 w-2 h-2 text-[#555]"><use href="#i-chev" /></svg></button>
        <button class="ml-auto" aria-label="Open panel"><svg class="w-3 h-3" viewBox="0 0 12 12"><path d="M.5 8.500L6 4l5.500 4.500" fill="none" stroke="#222" /></svg></button>
        <button class="ml-[13px]" aria-label="Maximize panel"><svg class="w-[11px] h-[11px]" viewBox="0 0 11 11"><path d="M6 .5h4.500V5M.5 6v4.500H5" fill="none" stroke="#222" /></svg></button>
      </div>

      <!-- Drawing properties -->
      <div class="absolute left-[771px] bottom-[38px] w-[213px] h-[25px] rounded bg-white shadow-md flex items-center pl-[6px] pr-[6px] text-[#222]">
        <svg class="w-[6px] h-[10px]"><use href="#i-grip" /></svg>
        <button class="ml-[10px]" aria-label="Templates"><svg class="w-3 h-3" viewBox="0 0 12 12"><path d="M1 1.500h3.500v3H1zM7.500 1.500H11v3H7.500zM1 7.500h3.500v3H1zM7 9h4.500M9.200 7v4" fill="none" stroke="currentColor" /></svg></button>
        <button class="ml-[13px]" aria-label="Line colour"><svg class="w-[14px] h-[18px]" viewBox="0 0 14 18"><path d="M3 11.500l.5-3 6-7 2.500 2-6 7zM8.500 3l2.500 2" fill="none" stroke="currentColor" /><path d="M0 15.500h14" stroke="#d9263f" stroke-width="2" /></svg></button>
        <button class="ml-[13px] flex items-center gap-[5px]"><svg class="w-[11px] h-1" viewBox="0 0 11 4"><path d="M0 2.500h11" stroke="currentColor" /></svg>1px</button>
        <button class="ml-3" aria-label="Settings"><svg class="w-4 h-4"><use href="#i-hex" /></svg></button>
        <button class="ml-[9px]" aria-label="Lock"><svg class="w-4 h-4"><use href="#i-lock" /></svg></button>
        <button class="ml-[9px]" aria-label="Remove"><svg class="w-4 h-4"><use href="#i-trash" /></svg></button>
        <button class="ml-auto" aria-label="More"><svg class="w-3 h-3" viewBox="0 0 12 12"><g fill="none" stroke="currentColor"><circle cx="1.700" cy="6" r="1.200" /><circle cx="6" cy="6" r="1.200" /><circle cx="10.300" cy="6" r="1.200" /></g></svg></button>
      </div>
    </main>

    <!-- Widgets -->
    <aside class="w-[31px] shrink-0 bg-white flex flex-col items-center text-[#222]">
      <button class="mt-px h-[30px]" aria-label="Watchlist"><svg class="w-[17px] h-[17px]" viewBox="0 0 18 18"><path d="M2.500 1.500h13v15l-2.500-1.500-2 1.500-2-1.500-2 1.500L5 15l-2.500 1.500zM5 5.500h8M5 8.500h8M5 11.500h8" fill="none" stroke="currentColor" /></svg></button>
      <button class="h-[30px]" aria-label="Alerts"><svg class="w-[17px] h-[17px]" viewBox="0 0 18 18"><circle cx="9" cy="9.500" r="7" fill="none" stroke="currentColor" /><path d="M9 5.500v5H6M1 4.500L4 1.500M14 1.500l3 3" fill="none" stroke="currentColor" /></svg></button>
      <button class="h-[31px]" aria-label="Object tree"><svg class="w-[17px] h-[17px]" viewBox="0 0 18 18"><path d="M9 2.500l7.500 4.500L9 11.500 1.500 7zM1.500 11L9 15.500l7.500-4.500" fill="none" stroke="currentColor" /></svg></button>
      <button class="h-[31px]" aria-label="Chats"><svg class="w-[17px] h-[17px]" viewBox="0 0 18 18"><path d="M1.500 2h12v10H5l-3.500 3zM15.500 6.500h1.500V17l-3-2.500H8.500V12" fill="none" stroke="currentColor" /></svg></button>
      <button class="mt-auto h-[29px]" aria-label="Ideas"><svg class="w-[17px] h-[17px]" viewBox="0 0 18 18"><path d="M9 1.500L4.500 9 1 16.500h16L13.500 9zM4.500 9L7 7.500l2 2.500 2-1.500 2.500 2" fill="none" stroke="currentColor" /></svg></button>
      <button class="h-[31px]" aria-label="Streams"><svg class="w-[17px] h-[17px]" viewBox="0 0 18 18"><path d="M2 2.500A13.500 13.500 0 0115.500 16M2 6.500A9.500 9.500 0 0111.500 16M2 10.500A5.500 5.500 0 017.500 16M2 14.500h2" fill="none" stroke="currentColor" /></svg></button>
      <button class="h-[28px]" aria-label="Notifications"><svg class="w-[17px] h-[17px]" viewBox="0 0 18 18"><path d="M1.500 14.500h15M3.500 14V7.500a5.500 5.500 0 0111 0V14M7 15a2 2 0 004 0" fill="none" stroke="currentColor" /></svg></button>
      <button class="mt-[6px] w-[22px] h-[22px] rounded-full bg-[#1f1f1f] flex items-center justify-center" aria-label="Products"><svg class="w-3 h-3" viewBox="0 0 12 12"><path d="M0 1.500h3M4.500 1.500h3M9 1.500h3M0 6h3M4.500 6h3M9 6h3M0 10.500h3M4.500 10.500h3M9 10.500h3" stroke="#fff" stroke-width="3" /></svg></button>
      <button class="mt-[17px] mb-[6px]" aria-label="Help"><svg class="w-5 h-5" viewBox="0 0 20 20"><circle cx="10" cy="10" r="9" fill="none" stroke="currentColor" /><path d="M7 8a3 3 0 116 0c0 2-3 2-3 4M10 14v1.500" fill="none" stroke="currentColor" /></svg></button>
    </aside>
  </div>

  <!-- Taskbar -->
  <footer class="h-8 shrink-0 bg-[#1f262d] border-t border-black flex items-center pl-3 pr-3 pb-px text-[8px] text-[#f0f0f0]">
    <button class="w-[18px] flex justify-center" aria-label="Start"><svg class="w-4 h-4" viewBox="0 0 16 16"><path d="M0 0h7.500v7.500H0zM8.500 0H16v7.500H8.500zM0 8.500h7.500V16H0zM8.500 8.500H16V16H8.500z" fill="#5cc3f2" /></svg></button>
    <label class="ml-2 w-[146px] h-[22px] rounded-full bg-[#3b4147] flex items-center pl-2 pr-1">
      <svg class="w-[10px] h-[10px] shrink-0" viewBox="0 0 10 10"><circle cx="4" cy="4" r="3.300" fill="none" stroke="#eee" stroke-width="1.200" /><path d="M6.500 6.500L9.500 9.500" stroke="#eee" stroke-width="1.200" /></svg>
      <input class="ml-[6px] w-[80px] flex-1 bg-transparent text-[9px] placeholder:text-[#cfd2d4] outline-none" type="search" aria-label="Search" placeholder="Search">
      <svg class="w-[25px] h-[17px] shrink-0" viewBox="0 0 25 17"><circle cx="6" cy="11" r="6" fill="#b7d433" /><path d="M2 8c3 2 6 1 8-1" stroke="#e8f5a0" fill="none" /><ellipse cx="16" cy="6" rx="5" ry="6" transform="rotate(-30 16 6)" fill="#9b8b88" stroke="#c0453c" /><path d="M12 4l8 5M13 8l6-6M12 7l6 4" stroke="#ddd" stroke-width=".6" /><path d="M19 11l5 5" stroke="#b83a30" stroke-width="2" /></svg>
    </label>
    <nav class="ml-[2px] w-[294px] flex items-center">
      <button class="flex-1 flex justify-center" aria-label="Copilot"><svg class="w-[15px] h-[15px]" viewBox="0 0 16 16"><path d="M5 1h5l-3 11H3c-2 0-3-1-2-4l1.500-5C3 1.500 4 1 5 1z" fill="#2e8fe0" /><path d="M6 15h5c1 0 2-.5 2.500-2L15 8c1-3 0-4-2-4H9z" fill="#e2588f" /><path d="M9 1h1c1.500 0 2 1 2.300 3H8z" fill="#3558d0" /><path d="M3 12h4l-1 3c-1.500 0-2-1-3-3z" fill="#f5b23e" /></svg></button>
      <button class="flex-1 flex justify-center" aria-label="File Explorer"><svg class="w-[17px] h-4" viewBox="0 0 17 16"><path d="M1 1h5l2 2h8v12H1z" fill="#e8a92d" /><path d="M1 5h15v10H1z" fill="#fbd35f" /><path d="M4 10h9v5H4z" fill="#2272b8" /></svg></button>
      <button class="flex-1 flex justify-center" aria-label="Edge"><svg class="w-4 h-4" viewBox="0 0 16 16"><circle cx="8" cy="8" r="8" fill="#1a7fc9" /><path d="M0 8a8 8 0 0116-1c0 3-2 4-5 4 2-3 0-5-3-5-4 0-7 2-8 2z" fill="#46d19b" /><path d="M1 7c3-3 7-2 8 0-3 0-4 3-2 5s5 2 7 0c-4 6-12 4-13-5z" fill="#0d58a8" /></svg></button>
      <button class="flex-1 flex justify-center" aria-label="Store"><svg class="w-4 h-[17px]" viewBox="0 0 16 17"><path d="M5 4V1h6v3" fill="none" stroke="#37b1e6" stroke-width="1.500" /><rect y="3.500" width="16" height="13" rx="2" fill="#f4f4f4" /><path d="M4.500 6.500h3v3h-3z" fill="#f25022" /><path d="M8.500 6.500h3v3h-3z" fill="#7fba00" /><path d="M4.500 10.500h3v3h-3z" fill="#00a4ef" /><path d="M8.500 10.500h3v3h-3z" fill="#ffb900" /></svg></button>
      <button class="flex-1 flex justify-center" aria-label="Mail"><svg class="w-4 h-4" viewBox="0 0 16 16"><path d="M0 6l8-5 8 5v9H0z" fill="#1b6fb8" /><path d="M2 5h12v5l-6 3-6-3z" fill="#eaf6ff" /><path d="M0 6l8 5 8-5v9H0z" fill="#3cb1ea" /></svg></button>
      <button class="flex-1 flex justify-center" aria-label="Whiteboard"><svg class="w-[17px] h-[15px]" viewBox="0 0 17 15"><rect y="1" width="16" height="13" rx="1" fill="#155fd0" /><path d="M2 9c2-4 3 1 5-1s3 0 6-3l4-4" fill="none" stroke="#9ce0ff" stroke-width="1.500" /></svg></button>
      <button class="flex-1 flex justify-center" aria-label="Secure browser"><svg class="w-[15px] h-[15px]" viewBox="0 0 16 16"><circle cx="8" cy="8" r="8" fill="#f0a43a" /><path d="M8 0a8 8 0 010 16c4-5 4-11 0-16z" fill="#8f4bd8" /><path d="M1 4A8 8 0 018 0v5z" fill="#e6549b" /><circle cx="8" cy="8" r="5" fill="#fff" /><path d="M8 5.500a1.300 1.300 0 01.8 2.300l.5 3H6.700l.5-3A1.300 1.300 0 018 5.500z" fill="#8a5a20" /></svg></button>
      <button class="flex-1 flex justify-center" aria-label="Charts app"><svg class="w-4 h-4" viewBox="0 0 16 16"><path d="M0 0h16v16H0z" fill="#1d5fc4" /><path d="M2.500 12.500L7 4h1.500L5 12.500zM7.500 12.500L12 4h2l-3 8.500z" fill="#e7f1ff" /></svg></button>
      <button class="flex-1 h-[28px] rounded bg-[#2b3137] flex flex-col items-center justify-end pb-px" aria-label="Chrome"><svg class="w-5 h-5" viewBox="0 0 20 20"><circle cx="8.500" cy="11.500" r="8" fill="#e04434" /><path d="M1.500 8A8 8 0 007 19.300L10 13z" fill="#2da14f" /><path d="M8.500 19.500a8 8 0 007.500-11H9l2 6z" fill="#f7c72f" /><circle cx="8.500" cy="11.500" r="3.800" fill="#fff" /><circle cx="8.500" cy="11.500" r="3" fill="#3f7de8" /><circle cx="15" cy="4.500" r="4.500" fill="#8dc9d6" /><path d="M11 6h8" stroke="#784" /></svg><span class="mt-[2px] w-[10px] h-[2px] rounded bg-[#6cc3ee]"></span></button>
      <button class="flex-1 h-[28px] flex flex-col items-center justify-end pb-px" aria-label="OBS"><svg class="w-5 h-5" viewBox="0 0 20 20"><circle cx="9.500" cy="11.500" r="7.500" fill="#23262a" stroke="#ccc" /><path d="M9 5c-3 2-2 6 1 6M4 14c3 2 6 0 5-3M14 15c0-4-3-5-5-3" fill="none" stroke="#ddd" stroke-width="1.400" /><circle cx="15.500" cy="4.500" r="4" fill="#f01919" /></svg><span class="mt-[2px] w-[3px] h-[2px] rounded bg-[#9a9a9a]"></span></button>
    </nav>
    <div class="ml-auto flex items-center">
      <svg class="w-[15px] h-[15px]" viewBox="0 0 15 15"><path d="M9 0a7.500 7.500 0 11-9 10.500C5 11.500 10 7 9 0z" fill="#f4a93c" /></svg>
      <p class="ml-[6px] leading-[11px]">80°F<br>Clear</p>
      <p class="ml-[66px] leading-[11px] text-right">10:28 PM<br>8/30/2026</p>
    </div>
  </footer>

  <script>
    // price path: x, y pairs in chart units
    const path = [
      38,550, 41,537, 45,550, 48,580, 52,580, 54,540, 56,507, 60,500, 63,490, 68,507, 72,503, 74,482, 78,521, 81,482, 84,497, 90,521, 95,497, 98,513, 102,492, 106,510, 109,527, 114,537, 118,517, 123,521, 128,517, 132,505, 135,530, 140,540, 143,568, 147,540, 149,512, 153,530, 154,562, 160,560, 162,513, 163,467, 166,438, 171,436, 174,482, 178,457, 180,436, 183,459, 187,430, 192,432, 194,422, 197,447, 200,436, 204,458, 208,443, 213,447, 214,478, 217,467, 224,467, 228,418, 231,418, 235,437, 240,433, 243,419, 247,452, 255,460, 260,432, 267,433, 272,440, 277,423, 280,408, 284,399, 288,407, 293,436, 302,430, 305,405, 307,404, 310,440, 318,445, 323,453, 330,460,
      336,437, 340,458, 347,485, 353,478, 360,494, 363,470, 372,453, 374,432, 376,435, 379,463, 384,442, 390,468, 396,457, 403,450, 406,476, 413,467, 416,424, 420,485, 424,449, 431,482, 438,458, 443,500, 453,504, 458,480, 463,445, 466,485, 469,436, 473,463, 478,466, 483,450, 487,495, 493,503, 495,490, 500,489, 502,527, 507,560, 513,567, 520,570, 525,537, 528,560, 533,517, 537,477, 542,487, 547,511, 552,503, 556,518, 558,475, 564,472, 570,505, 577,480, 582,537, 587,527, 592,577, 603,573, 607,550, 611,552, 613,523, 617,518, 620,537, 622,517, 627,557, 633,577, 643,558, 648,577, 655,567, 662,580, 672,572, 677,582, 688,575, 692,560, 694,523, 697,503,
      702,500, 705,487, 708,493, 712,477, 715,438, 718,492, 725,499, 727,477, 730,453, 733,424, 740,450, 745,477, 750,500, 755,523, 760,511, 765,528, 773,513, 777,473, 781,444, 785,467, 792,492, 797,473, 803,480, 805,487, 813,502, 817,470, 820,428, 823,467, 828,447, 830,420, 833,405, 836,450, 842,467, 845,473, 850,437, 853,453, 858,424, 861,457, 866,453, 867,503, 872,518, 877,503, 880,470, 883,463, 886,420, 890,390, 892,370, 894,357, 898,385, 902,350, 907,323, 908,312, 912,328, 913,292, 914,330, 915,367, 918,420, 923,402, 927,377, 928,393, 932,363, 937,333, 940,370, 943,310, 946,340
    ];

    let seed = 7;
    function rnd() {
      seed = (seed * 16807) % 2147483647;
      return seed / 2147483647;
    }

    let dark = '', soft = '', prev = path[1];
    for (let i = 0; i < path.length - 2; i += 2) {
      const [x0, y0, x1, y1] = path.slice(i, i + 4);
      const steps = Math.max(1, x1 - x0);
      for (let s = 0; s < steps; s++) {
        const y = y0 + (y1 - y0) * s / steps + (rnd() - 0.5) * 12;
        const wick = rnd() < 0.15 ? 12 : 3;
        const top = Math.min(prev, y) - rnd() * wick;
        const bottom = Math.max(prev, y) + rnd() * wick;
        // some bars are drawn faint only
        if (rnd() < 0.82) dark += `M${x0 + s + 0.5} ${top.toFixed(1)}V${bottom.toFixed(1)}`;
        else soft += `M${x0 + s + 0.5} ${(top - 3).toFixed(1)}V${(bottom + 3).toFixed(1)}`;
        prev = y;
      }
    }
    // single long wicks
    dark += 'M94.500 477V500M180.500 418V440M193.500 411V425M415.500 403V440M373.500 415V440M469.500 415V440M463.500 423V450M482.500 430V455M715.500 423V440M831.500 394V480M820.500 415V450M912.500 288V350M917.500 370V430M943.500 305V330M892.500 352V390';
    document.getElementById('bars').setAttribute('d', dark);
    document.getElementById('bars-soft').setAttribute('d', soft);

    // grid and time labels
    const ticks = [[39, '12'], [94, '15'], [135, '17'], [199, '19'], [254, '22'], [295, '24'], [359, '26'], [414, 'Mar'], [455, '3'], [519, '5'], [574, '8'], [616, ''], [679, ''], [734, '15'], [775, '17'], [839, '19'], [894, '22'], [936, '24'], [999, '26'], [1054, '29'], [1095, '31']];
    let grid = '';
    const axis = document.getElementById('time-axis');
    ticks.forEach(([x, label]) => {
      grid += `M${x + 0.5} 86V582`;
      if (!label) return;
      const el = document.createElement('span');
      el.className = 'absolute top-1 -translate-x-1/2';
      el.style.left = ((x - 37) / 1169 * 100) + '%';
      el.textContent = label;
      axis.appendChild(el);
    });
    for (let y = 118; y < 582; y += 39.8) grid += `M37 ${Math.round(y) + 0.5}H1206`;
    document.getElementById('grid').setAttribute('d', grid);

    const now = document.createElement('span');
    now.className = 'absolute top-0 h-4 w-[105px] -translate-x-1/2 bg-[#131722] text-white font-semibold text-center leading-4 whitespace-pre';
    now.style.left = '52.800%';
    now.textContent = "Wed 11 Mar '26   05:30 AM";
    axis.appendChild(now);
  </script>
</body>

</html>
